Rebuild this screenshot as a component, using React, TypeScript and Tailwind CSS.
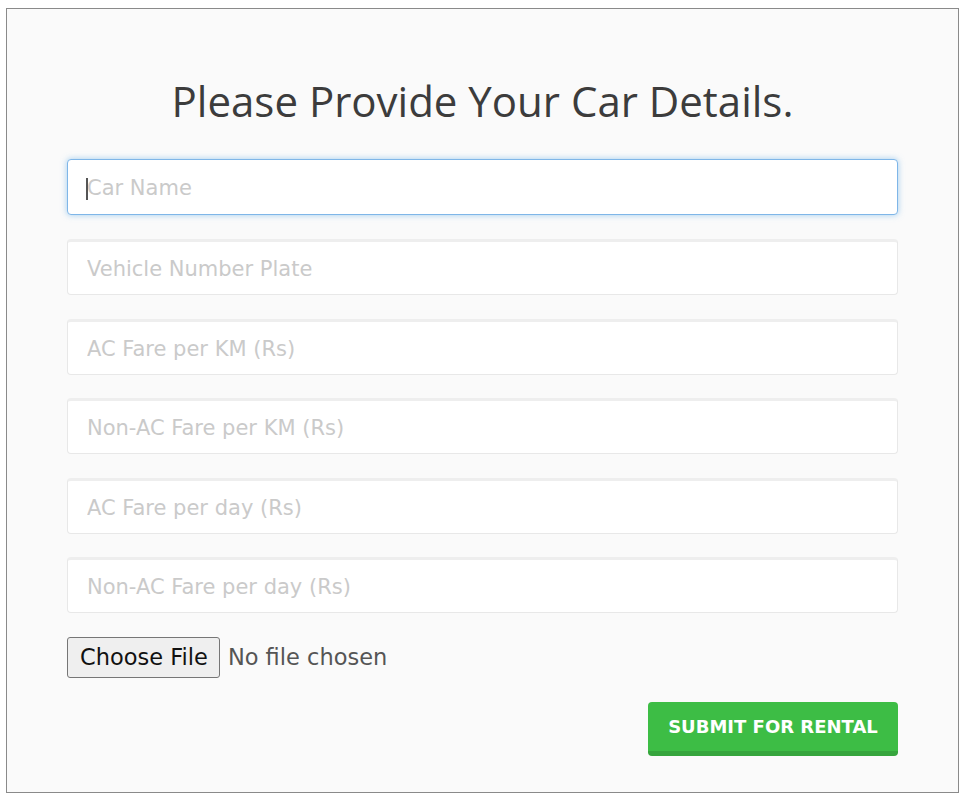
import React from "react";

const fields = [
  "Car Name",
  "Vehicle Number Plate",
  "AC Fare per KM (Rs)",
  "Non-AC Fare per KM (Rs)",
  "AC Fare per day (Rs)",
  "Non-AC Fare per day (Rs)",
];

const gaps = ["mt-0", "mt-[24px]", "mt-[24px]", "mt-[23px]", "mt-[24px]", "mt-[23px]"];

export default function App() {
  return (
    <div className="min-h-[799px] w-[964px] bg-white pl-[6px] pt-[8px]">
      <div className="w-[953px] h-[785px] border border-[#8a8a8a] bg-[#fafafa] px-[60px] pt-[64px]">
        <h1
          className="text-center text-[42px] leading-[56px] text-[#3c3c3c]"
          style={{ fontFamily: "'Open Sans', 'Noto Sans', sans-serif" }}
        >
          Please Provide Your Car Details.
        </h1>
        <form className="mt-[30px] flex flex-col" onSubmit={(e) => e.preventDefault()}>
          {fields.map((f, i) => (
            <div key={f} className={"relative " + gaps[i]}>
              <input
                placeholder={f}
                className={
                  "block h-[56px] w-[831px] rounded-[4px] bg-white px-[19px] pt-[2px] text-[21px] text-[#555] outline-none placeholder:text-[#cacaca] " +
                  (i === 0
                    ? "border border-[#7fb6e8] shadow-[0_0_6px_rgba(102,175,233,0.6)] caret-transparent"
                    : "border border-[#e8e8e8] border-t-[3px] border-t-[#eeeeee]")
                }
                style={{ fontFamily: "'DejaVu Sans', Verdana, sans-serif" }}
              />
              {i === 0 && (
                <span className="pointer-events-none absolute left-[19px] top-[19px] h-[22px] w-[2px] bg-[#555]" />
              )}
            </div>
          ))}
          <input
            type="file"
            className="mt-[24px] h-[41px] text-[22.5px] text-[#555] file:mr-[8px] file:h-[41px] file:rounded-[3px] file:border file:border-[#767676] file:bg-[#efefef] file:pl-[12px] file:pr-[11px] file:text-[#111]"
            style={{ fontFamily: "'DejaVu Sans', Verdana, sans-serif" }}
          />
          <div className="mt-[24px] flex w-[831px] justify-end">
            <button
              type="submit"
              className="h-[54px] w-[250px] rounded-[4px] border-b-[5px] border-b-[#36a53d] bg-[#3dbd45] text-[18px] font-bold text-white"
              style={{ fontFamily: "'DejaVu Sans', Verdana, sans-serif" }}
            >
              SUBMIT FOR RENTAL
            </button>
          </div>
        </form>
      </div>
    </div>
  );
}
